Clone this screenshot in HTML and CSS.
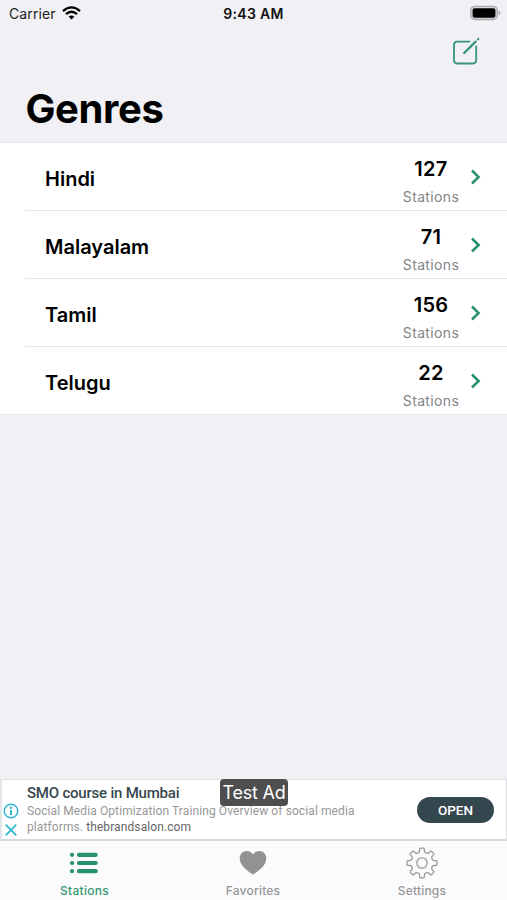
FILE: index.html
```html
<!DOCTYPE html>
<html lang="en">
<head>
<meta charset="utf-8">
<title>Genres</title>
<link rel="stylesheet" href="styles.css">
</head>
<body>
<div class="app">
  <header class="status">
    <div class="carrier"><span>Carrier</span>
      <svg class="wifi" width="19" height="14" viewBox="0 0 19 14"><g fill="none" stroke="#000" stroke-width="2.3"><path d="M1 5.1Q9.500-2.300 18 5.100"/><path d="M4 8.200Q9.500 3.400 15 8.200"/></g><path d="M6.600 10.600Q9.500 8.200 12.400 10.600L9.500 13.500Z"/></svg>
    </div>
    <span class="time">9:43 AM</span>
    <svg class="battery" width="31" height="16" viewBox="0 0 31 16"><rect x=".8" y="1.300" width="26.400" height="13.200" rx="4" fill="#d8d8dc" stroke="#aaaaad" stroke-width="1.300"/><rect x="2.600" y="3.200" width="22.800" height="9.500" rx="2" fill="#000"/><path d="M28.500 5.500Q30.500 6.200 30.500 7.900T28.500 10.300Z" fill="#aaaaad"/></svg>
  </header>
  <div class="toolbar">
    <svg width="28" height="28" viewBox="0 0 28 28" fill="none" stroke="#36957a" stroke-linecap="round"><path d="M17.500 4.600H5.200Q2 4.600 2 7.800V23.300Q2 26.500 5.200 26.500H21Q24.200 26.500 24.200 23.300V9.500" stroke-width="1.800"/><path d="M12.200 16L23.600 4.600M26 2.200L26.200 2" stroke-width="2.300"/></svg>
  </div>
  <h1>Genres</h1>
  <main class="list">
    <div class="row"><span class="name">Hindi</span><div class="count"><b>127</b><small>Stations</small></div><svg class="chev" width="12" height="18" viewBox="0 0 12 18"><path d="M2 2.500L8.600 9L2 15.500"/></svg></div>
    <div class="row"><span class="name">Malayalam</span><div class="count"><b>71</b><small>Stations</small></div><svg class="chev" width="12" height="18" viewBox="0 0 12 18"><path d="M2 2.500L8.600 9L2 15.500"/></svg></div>
    <div class="row"><span class="name">Tamil</span><div class="count"><b>156</b><small>Stations</small></div><svg class="chev" width="12" height="18" viewBox="0 0 12 18"><path d="M2 2.500L8.600 9L2 15.500"/></svg></div>
    <div class="row"><span class="name">Telugu</span><div class="count"><b>22</b><small>Stations</small></div><svg class="chev" width="12" height="18" viewBox="0 0 12 18"><path d="M2 2.500L8.600 9L2 15.500"/></svg></div>
  </main>
  <section class="ad">
    <div class="ad-icons">
      <svg width="16" height="16" viewBox="0 0 16 16"><circle cx="8" cy="8" r="6.800" fill="none" stroke="#2bb5d1" stroke-width="1.400"/><path d="M8 7V12" stroke="#2bb5d1" stroke-width="2"/><circle cx="8" cy="4.700" r="1.200" fill="#2bb5d1"/></svg>
      <svg width="16" height="16" viewBox="0 0 16 16"><path d="M2.700 2.700L13.300 13.300M13.300 2.700L2.700 13.300" stroke="#2bb5d1" stroke-width="1.700"/></svg>
    </div>
    <div class="ad-text">
      <div class="ad-title">SMO course in Mumbai</div>
      <div class="ad-line">Social Media Optimization Training Overview of social media</div>
      <div class="ad-line second">platforms. <span>thebrandsalon.com</span></div>
    </div>
    <div class="open">OPEN</div>
    <div class="test">Test Ad</div>
  </section>
  <nav class="tabs">
    <div class="tab active"><svg width="30" height="32" viewBox="0 0 30 32" fill="none" stroke="#27926b" stroke-width="4.200" stroke-linecap="round"><path d="M3 7.800H3.100M3 16H3.100M3 24.200H3.100M10 7.800H26.700M10 16H26.700M10 24.200H26.700"/></svg><span>Stations</span></div>
    <div class="tab"><svg width="30" height="32" viewBox="0 0 30 32" fill="#929294"><path d="M15 27.600C11 24.900 1.700 19 1.700 11.500C1.700 7.200 4.800 4.100 8.600 4.100C11.400 4.100 13.800 5.400 15 7.400C16.200 5.400 18.600 4.100 21.400 4.100C25.200 4.100 28.300 7.200 28.300 11.500C28.300 19 19 24.900 15 27.600Z"/></svg><span>Favorites</span></div>
    <div class="tab"><svg width="32" height="32" viewBox="-16 -16 32 32" fill="none" stroke="#9a9a9c" stroke-width="1.300" stroke-linejoin="round"><path id="gear" d=""/><circle r="5.200"/></svg><span>Settings</span></div>
  </nav>
</div>
<script src="gear.js"></script>
</body>
</html>
```
FILE: styles.css
```css
* { box-sizing: border-box; }
body { margin: 0; background: #f0f0f5; font-family: Inter, sans-serif; color: #000; }
.app { width: 507px; height: 900px; display: flex; flex-direction: column; overflow: hidden; }
svg { display: block; flex: none; }
.status { height: 28px; display: grid; grid-template-columns: 1fr auto 1fr; align-items: center; padding: 0 6px 1px 9px; font-size: 14px; color: #222; }
.carrier { display: flex; align-items: center; gap: 6px; letter-spacing: .1px; }
.wifi { margin-top: -1px; }
.time { font-weight: 600; font-size: 14px; color: #111; letter-spacing: .3px; margin-right: 3px; }
.battery { justify-self: end; margin-top: -1px; }
.toolbar { height: 48px; display: flex; justify-content: flex-end; padding: 9px 27px 0 0; }
h1 { margin: 0; height: 66px; padding-left: 25.5px; font-size: 40px; line-height: 66px; font-weight: 700; letter-spacing: -0.4px; }
.list { height: 273px; background: #fff; border-top: 1px solid #e6e6ea; }
.row { height: 68px; margin-left: 25px; padding: 0 25px 0 20px; display: flex; align-items: center; border-bottom: 1px solid #e6e6e8; }
.row:last-child { margin-left: 0; padding-left: 45px; }
.name { flex: 1; font-size: 20px; font-weight: 600; line-height: 24px; padding-top: 4px; }
.count { width: 60px; display: flex; flex-direction: column; align-items: center; padding-top: 13px; }
.count b { font-size: 20px; font-weight: 600; line-height: 28px; letter-spacing: .3px; }
.count small { font-size: 14px; line-height: 28px; color: #858587; letter-spacing: .35px; }
.chev { margin-left: 9px; fill: none; stroke: #279169; stroke-width: 2.5; }
.ad { position: relative; margin-top: auto; height: 62px; border: 1px solid #dedee1; border-left: 2px solid #e5e5e8; border-bottom: 2px solid #d9d9dd; background: #fff; display: flex; font-family: Roboto, sans-serif; }
.ad-icons { width: 25px; padding: 23px 0 0 1px; display: flex; flex-direction: column; gap: 3px; }
.ad-text { flex: 1; padding-top: 4px; white-space: nowrap; }
.ad-title { font-size: 15px; line-height: 19px; font-weight: 500; color: #37474f; letter-spacing: -.21px; }
.ad-line { font-size: 12px; line-height: 16px; color: #979797; letter-spacing: .1px; }
.ad-line span { color: #666; }
.open { margin: 17px 12px 0 0; width: 77px; height: 26px; border-radius: 13px; background: #34474f; color: #fff; font-weight: 500; font-size: 13.5px; line-height: 26px; text-align: center; }
.test { position: absolute; left: 218px; top: -1px; width: 68px; height: 27px; border-radius: 4px; background: #4e4e4e; color: #fff; font: 18px/27px Inter, sans-serif; letter-spacing: -.2px; text-align: center; white-space: nowrap; }
.tabs { height: 59px; background: #fbfbfd; display: grid; grid-template-columns: repeat(3, 1fr); }
.tab { display: flex; flex-direction: column; align-items: center; padding-top: 6px; font-size: 12px; font-weight: 500; line-height: 15px; color: #979799; letter-spacing: .3px; }
.tab svg { margin-left: -1px; }
.tab span { margin-top: 4px; }
.tab:not(.active) span { letter-spacing: .2px; margin-right: 1px; }
.active { color: #36986f; }
```
FILE: gear.js
```js
// Eight rounded teeth around a circular hub.
const point = (radius, degrees) => {
  const a = degrees * Math.PI / 180;
  return `${(radius * Math.cos(a)).toFixed(2)} ${(radius * Math.sin(a)).toFixed(2)}`;
};
let outline = '';
for (let i = 0; i < 8; i++) {
  const c = i * 45;
  outline += `${i ? 'L' : 'M'}${point(11.5, c - 13)}L${point(14.4, c - 9)}Q${point(15.2, c - 8)} ${point(15, c - 5)}L${point(15, c + 5)}Q${point(15.2, c + 8)} ${point(14.4, c + 9)}L${point(11.5, c + 13)}Q${point(10.1, c + 22.5)} ${point(11.5, c + 32)}`;
}
document.getElementById('gear').setAttribute('d', outline + 'Z');
```
